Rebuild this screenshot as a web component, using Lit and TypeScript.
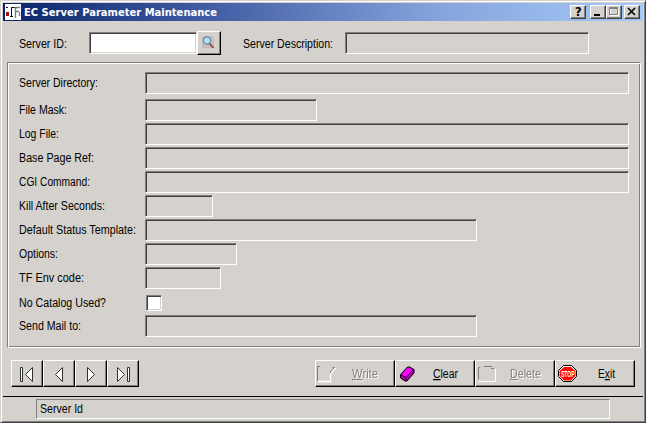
import { LitElement, html, css, svg } from "lit";
import { customElement, property } from "lit/decorators.js";

/* Bitmap-style label: text fitted to a fixed advance width. */
@customElement("fit-text")
class FitText extends LitElement {
  @property() text = "";
  @property({ type: Number }) width = 50;
  @property() accel = "";
  @property({ type: Boolean, reflect: true }) disabled = false;
  @property({ type: Boolean, reflect: true }) heading = false;
  static styles = css`
    :host { display: block; height: 16px; flex: none; }
    svg { display: block; overflow: visible; }
    text { font: 12.5px "Liberation Sans", sans-serif; fill: #000; }
    :host([disabled]) text { fill: #85827e; }
    :host([heading]) text { font: bold 11.3px "DejaVu Sans", sans-serif; fill: #fff; }
    .accel { text-decoration: underline; }
    .embossed { filter: drop-shadow(1px 1px 0 #fff); }
  `;
  render() {
    const i = this.accel ? this.text.indexOf(this.accel) : -1;
    const body = i < 0 ? this.text
      : svg`${this.text.slice(0, i)}<tspan class="accel">${this.accel}</tspan>${this.text.slice(i + 1)}`;
    return html`<svg class=${this.disabled ? "embossed" : ""} width=${this.width} height="16"><text x="0" y="12" textLength=${this.width} lengthAdjust="spacingAndGlyphs">${body}</text></svg>`;
  }
}

type Row = { label: string; w: number; field: number; h: number; check?: boolean };
const rows: Row[] = [
  { label: "Server Directory:", w: 79, field: 484, h: 27 },
  { label: "File Mask:", w: 48, field: 172, h: 24 },
  { label: "Log File:", w: 40, field: 484, h: 24 },
  { label: "Base Page Ref:", w: 75, field: 484, h: 24 },
  { label: "CGI Command:", w: 71, field: 484, h: 24 },
  { label: "Kill After Seconds:", w: 86, field: 68, h: 24 },
  { label: "Default Status Template:", w: 117, field: 332, h: 24 },
  { label: "Options:", w: 39, field: 92, h: 24 },
  { label: "TF Env code:", w: 65, field: 76, h: 24 },
  { label: "No Catalog Used?", w: 87, field: 16, h: 24, check: true },
  { label: "Send Mail to:", w: 62, field: 332, h: 24 },
];

const navIcons = [
  svg`<path d="M8.500 6.500h2v14h-2z"/><path d="M20.500 6.500v14l-7-7z"/>`,
  svg`<path d="M18.500 6.500v14l-7-7z"/>`,
  svg`<path d="M11.500 6.500v14l7-7z"/>`,
  svg`<path d="M9.500 6.500v14l7-7z"/><path d="M19.500 6.500h2v14h-2z"/>`,
];

const actions = [
  { text: "Write", accel: "W", w: 26, pad: 36, disabled: true,
    icon: svg`<path class="gray" d="M1.500 20V5.500H4"/><path class="white" d="M2 20.500h12.500V13l5-6" stroke-width="1.300"/><path class="gray" d="M14.500 10.500l4-4h-2M14.500 10v2"/>` },
  { text: "Clear", accel: "C", w: 25, pad: 37, disabled: false,
    icon: svg`<path d="M4.500 13.500l7-7.500h2l4.500 2.500v3.500l-7 8h-2l-4.500-3z" fill="#b000b0" stroke="#000"/><path d="M5.500 13.500l6.500-7 5 2.500-6.500 7z" fill="#ff00ff"/><path d="M5 14l5 2.500v3.500M10 16.500l7.500-8" fill="none" stroke="#300030"/>` },
  { text: "Delete", accel: "D", w: 31, pad: 34, disabled: true,
    icon: svg`<path class="gray" d="M2.500 18V6.500H4M8 5.500h8M18 7.500h-3"/><path class="white" d="M3 20.500h16.500V8"/>` },
  { text: "Exit", accel: "x", w: 17, pad: 42, disabled: false,
    icon: svg`<path d="M7.500 4.500h8l5 5v6l-5 5h-8l-5-5v-6z" fill="#fff" stroke="#000"/><path d="M8 6h7l4.500 4v5l-4.500 4.500H8L3.500 15v-5z" fill="#ff0808"/><text x="5" y="15.700" textLength="13.500" lengthAdjust="spacingAndGlyphs">STOP</text>` },
];

@customElement("app-root")
class AppRoot extends LitElement {
  static styles = css`
    :host { display: block; width: 646px; height: 423px; }
    * { box-sizing: border-box; }
    svg { display: block; }
    .window { width: 646px; height: 423px; background: #d5d2cd; display: flex; flex-direction: column;
      border: 1px solid; border-color: #d5d2cd #404040 #404040 #d5d2cd;
      box-shadow: inset 1px 1px #fff, inset -1px -1px #808080; padding: 2px 2px 0 2px; }
    .title { height: 18px; flex: none; display: flex; align-items: center; padding: 0 3px 0 2px;
      background: linear-gradient(90deg, #0a246a, #4560a6 34%, #85a4dc 68%, #a6caf8); }
    .title fit-text { margin-left: 3px; }
    .gap { flex: 1; }
    .cap { width: 16px; height: 14px; background: #d5d2cd; border: 1px solid; border-color: #fff #404040 #404040 #fff;
      box-shadow: inset -1px -1px #808080; }
    .cap.max { margin-right: 2px; }
    .cap.help { margin-right: 4px; }
    .cap path { fill: none; stroke: #000; }
    .cap text { font: bold 11.500px "DejaVu Sans", sans-serif; }
    .head { height: 41px; flex: none; display: flex; padding: 11px 0 0 16px; }
    .head fit-text { margin-top: 4px; }
    .id-label { width: 70px; }
    .id-field { width: 108px; }
    .desc-label { width: 124px; padding-left: 22px; }
    .desc-field { width: 244px; }
    .field { height: 22px; flex: none; border: 1px solid; border-color: #808080 #fff #fff #808080;
      box-shadow: inset 1px 1px #404040; }
    .input { background: #fff; box-shadow: inset 1px 1px #404040, inset -1px -1px #d5d2cd; }
    .raised { background: #d5d2cd; border: 1px solid; border-color: #fff #000 #000 #fff; box-shadow: inset -1px -1px #808080; }
    .find { width: 24px; height: 24px; margin: -1px 0 0 0; }
    .group { margin: 0 2px 0 4px; height: 286px; flex: none; border: 1px solid; border-color: #808080 #fff #fff #808080;
      box-shadow: inset 1px 1px #fff, inset -1px -1px #808080; padding: 9px 0 0 11px; }
    .row { display: flex; }
    .row fit-text { margin-top: 3px; }
    .row.flag fit-text { margin-top: 4px; }
    .lab { width: 126px; flex: none; }
    .check { width: 16px; height: 16px; margin: 4px 0 0 1px; background: #fff; border: 1px solid;
      border-color: #808080 #fff #fff #808080; box-shadow: inset 1px 1px #404040, inset -1px -1px #d5d2cd; }
    .bar { display: flex; height: 27px; margin: 12px 8px 0 8px; flex: none; }
    .nav { width: 32px; }
    .nav path { fill: #fff; stroke: #303030; stroke-width: 1; }
    .act { width: 80px; display: flex; }
    .act .icon { width: 0; }
    .act .icon svg { overflow: visible; }
    .act fit-text { margin-top: 5px; }
    .gray { fill: none; stroke: #808080; }
    .white { fill: none; stroke: #fff; }
    .icon text { font: bold 8.500px "Liberation Sans", sans-serif; fill: #fff; }
    .status { border-top: 1px solid #000; margin-top: 9px; padding: 2px 0 0 33px; flex: none; }
    .cell { width: 574px; height: 20px; border: 1px solid; border-color: #808080 #fff #fff #808080; padding: 1px 0 0 3px; }
  `;
  render() {
    return html`<div class="window">
      <div class="title">
        <svg width="16" height="16"><path fill="#fff" d="M0 0h16v16H0z"/><path fill="#a01020" d="M1 8h3v4H1z"/><path d="M1 3.500h2M6.500 3v9M5 12.500h3M6 3.500h4" stroke="#112" fill="none"/><path d="M10.500 3v11M11 3.500h4M11 7.500h3M14.500 8v4" stroke="#777a88" stroke-width="1.300" fill="none"/></svg>
        <fit-text heading text="EC Server Parameter Maintenance" width="193"></fit-text>
        <span class="gap"></span>
        <div class="cap help"><svg width="14" height="12"><text x="4" y="10">?</text></svg></div>
        <div class="cap"><svg width="14" height="12"><path d="M3 9h6" stroke-width="2"/></svg></div>
        <div class="cap max"><svg width="14" height="12"><path d="M3.500 2.500h8v7h-8z" style="stroke:#fff"/><path d="M2.500 1.500h8v7h-8zM2.500 2.500h8" style="stroke:#808080"/></svg></div>
        <div class="cap"><svg width="14" height="12"><path d="M3 2l7 7M10 2l-7 7" stroke-width="1.600"/></svg></div>
      </div>
      <div class="head">
        <div class="id-label"><fit-text text="Server ID:" width="48"></fit-text></div>
        <div class="field input id-field"></div>
        <div class="raised find"><svg width="22" height="22"><path d="M4 4h12v12H4z" fill="#c2bfbd"/><path d="M11.500 11.500l4 4.500" stroke="#865038" stroke-width="1.800"/><circle cx="9" cy="8.500" r="3.700" fill="#a8e4f4" stroke="#668"/></svg></div>
        <div class="desc-label"><fit-text text="Server Description:" width="90"></fit-text></div>
        <div class="field desc-field"></div>
      </div>
      <div class="group">
        ${rows.map((r) => html`<div class=${r.check ? "row flag" : "row"} style="height:${r.h}px"><div class="lab"><fit-text text=${r.label} width=${r.w}></fit-text></div>
          ${r.check ? html`<div class="check"></div>` : html`<div class="field" style="width:${r.field}px"></div>`}</div>`)}
      </div>
      <div class="bar">
        ${navIcons.map((n) => html`<div class="raised nav"><svg width="30" height="25">${n}</svg></div>`)}
        <span class="gap"></span>
        ${actions.map((a) => html`<div class="raised act"><div class="icon"><svg width="24" height="25">${a.icon}</svg></div>
          <fit-text style="margin-left:${a.pad}px" text=${a.text} accel=${a.accel} width=${a.w} ?disabled=${a.disabled}></fit-text></div>`)}
      </div>
      <div class="status"><div class="cell"><fit-text text="Server Id" width="43"></fit-text></div></div>
    </div>`;
  }
}
